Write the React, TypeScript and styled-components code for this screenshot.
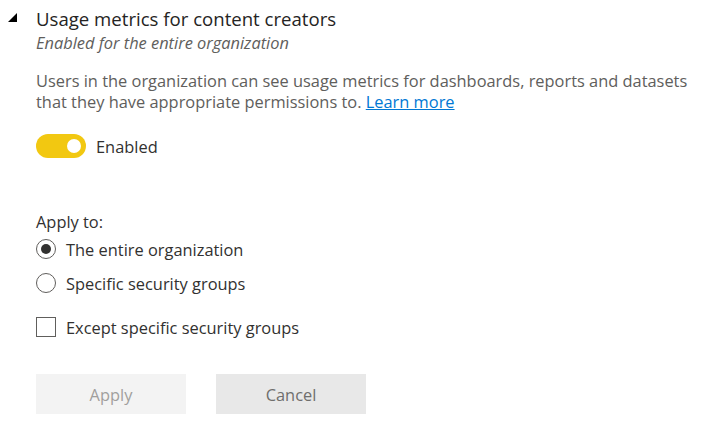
import React, { useState } from 'react'
import styled, { createGlobalStyle } from 'styled-components'

const GlobalStyle = createGlobalStyle`
  body {
    margin: 0;
    background: #ffffff;
    font-family: "Segoe UI", "Open Sans", "Noto Sans", sans-serif;
  }
`

const Section = styled.section`
  display: flex;
  padding: 7px 0 0 0;
`

const CaretCol = styled.div`
  width: 36px;
  flex: none;
  display: flex;
  justify-content: center;
  padding-top: 6px;
  padding-right: 11px;
  box-sizing: border-box;
`

const Body = styled.div`
  display: flex;
  flex-direction: column;
  flex: 1;
`

const Title = styled.h2`
  margin: 0;
  font-size: 18.6px;
  line-height: 24px;
  font-weight: 400;
  color: #252423;
`

const Subtitle = styled.div`
  margin-top: 1px;
  font-size: 16.4px;
  line-height: 22px;
  font-style: italic;
  color: #605e5c;
`

const Description = styled.p`
  margin: 16px 0 0 0;
  font-size: 16.4px;
  line-height: 21px;
  color: #605e5c;
  max-width: 664px;
`

const Link = styled.a`
  color: #0078d4;
  text-decoration: underline;
`

const ToggleRow = styled.label`
  display: flex;
  align-items: center;
  gap: 10px;
  margin-top: 22px;
  font-size: 16.4px;
  color: #323130;
  cursor: pointer;
`

const Track = styled.span<{ on: boolean }>`
  position: relative;
  width: 50px;
  height: 24px;
  border-radius: 12px;
  background: ${({ on }) => (on ? '#f2c811' : '#c8c6c4')};
`

const Knob = styled.span<{ on: boolean }>`
  position: absolute;
  top: 5px;
  left: ${({ on }) => (on ? '31px' : '5px')};
  width: 14px;
  height: 14px;
  border-radius: 50%;
  background: #ffffff;
`

const GroupLabel = styled.div`
  margin-top: 53px;
  font-size: 16.4px;
  line-height: 22px;
  color: #323130;
`

const OptionList = styled.div`
  display: flex;
  flex-direction: column;
  gap: 12px;
  margin-top: 5px;
`

const Option = styled.label`
  display: flex;
  align-items: center;
  gap: 10px;
  height: 22px;
  font-size: 16.4px;
  color: #323130;
  cursor: pointer;
`

const RadioMark = styled.span<{ checked: boolean }>`
  width: 20px;
  height: 20px;
  box-sizing: border-box;
  border-radius: 50%;
  border: 1px solid #605e5c;
  display: flex;
  align-items: center;
  justify-content: center;

  &::after {
    content: '';
    width: 10px;
    height: 10px;
    border-radius: 50%;
    background: #323130;
    display: ${({ checked }) => (checked ? 'block' : 'none')};
  }
`

const CheckRow = styled(Option)`
  margin-top: 22px;
`

const CheckMark = styled.span`
  width: 20px;
  height: 20px;
  box-sizing: border-box;
  border: 1px solid #605e5c;
`

const Actions = styled.div`
  display: flex;
  gap: 30px;
  margin-top: 36px;
`

const Button = styled.button<{ variant: 'disabled' | 'secondary' }>`
  width: 150px;
  height: 40px;
  border: none;
  font-family: inherit;
  font-size: 16.4px;
  background: ${({ variant }) => (variant === 'disabled' ? '#f3f3f3' : '#e8e8e8')};
  color: ${({ variant }) => (variant === 'disabled' ? '#a19f9d' : '#6f6e6d')};
`

const App: React.FC = () => {
  const [enabled, setEnabled] = useState(true)
  const [scope, setScope] = useState<'org' | 'groups'>('org')

  return (
    <>
      <GlobalStyle />
      <Section>
        <CaretCol>
          <svg width="9" height="9" viewBox="0 0 9 9">
            <polygon points="9,0 9,9 0,9" fill="#000" />
          </svg>
        </CaretCol>
        <Body>
          <Title>Usage metrics for content creators</Title>
          <Subtitle>Enabled for the entire organization</Subtitle>
          <Description>
            Users in the organization can see usage metrics for dashboards, reports and datasets that they have
            appropriate permissions to. <Link href="#">Learn more</Link>
          </Description>
          <ToggleRow onClick={() => setEnabled(!enabled)}>
            <Track on={enabled}>
              <Knob on={enabled} />
            </Track>
            {enabled ? 'Enabled' : 'Disabled'}
          </ToggleRow>
          <GroupLabel>Apply to:</GroupLabel>
          <OptionList>
            <Option onClick={() => setScope('org')}>
              <RadioMark checked={scope === 'org'} />
              The entire organization
            </Option>
            <Option onClick={() => setScope('groups')}>
              <RadioMark checked={scope === 'groups'} />
              Specific security groups
            </Option>
          </OptionList>
          <CheckRow>
            <CheckMark />
            Except specific security groups
          </CheckRow>
          <Actions>
            <Button variant="disabled">Apply</Button>
            <Button variant="secondary">Cancel</Button>
          </Actions>
        </Body>
      </Section>
    </>
  )
}

export default App
